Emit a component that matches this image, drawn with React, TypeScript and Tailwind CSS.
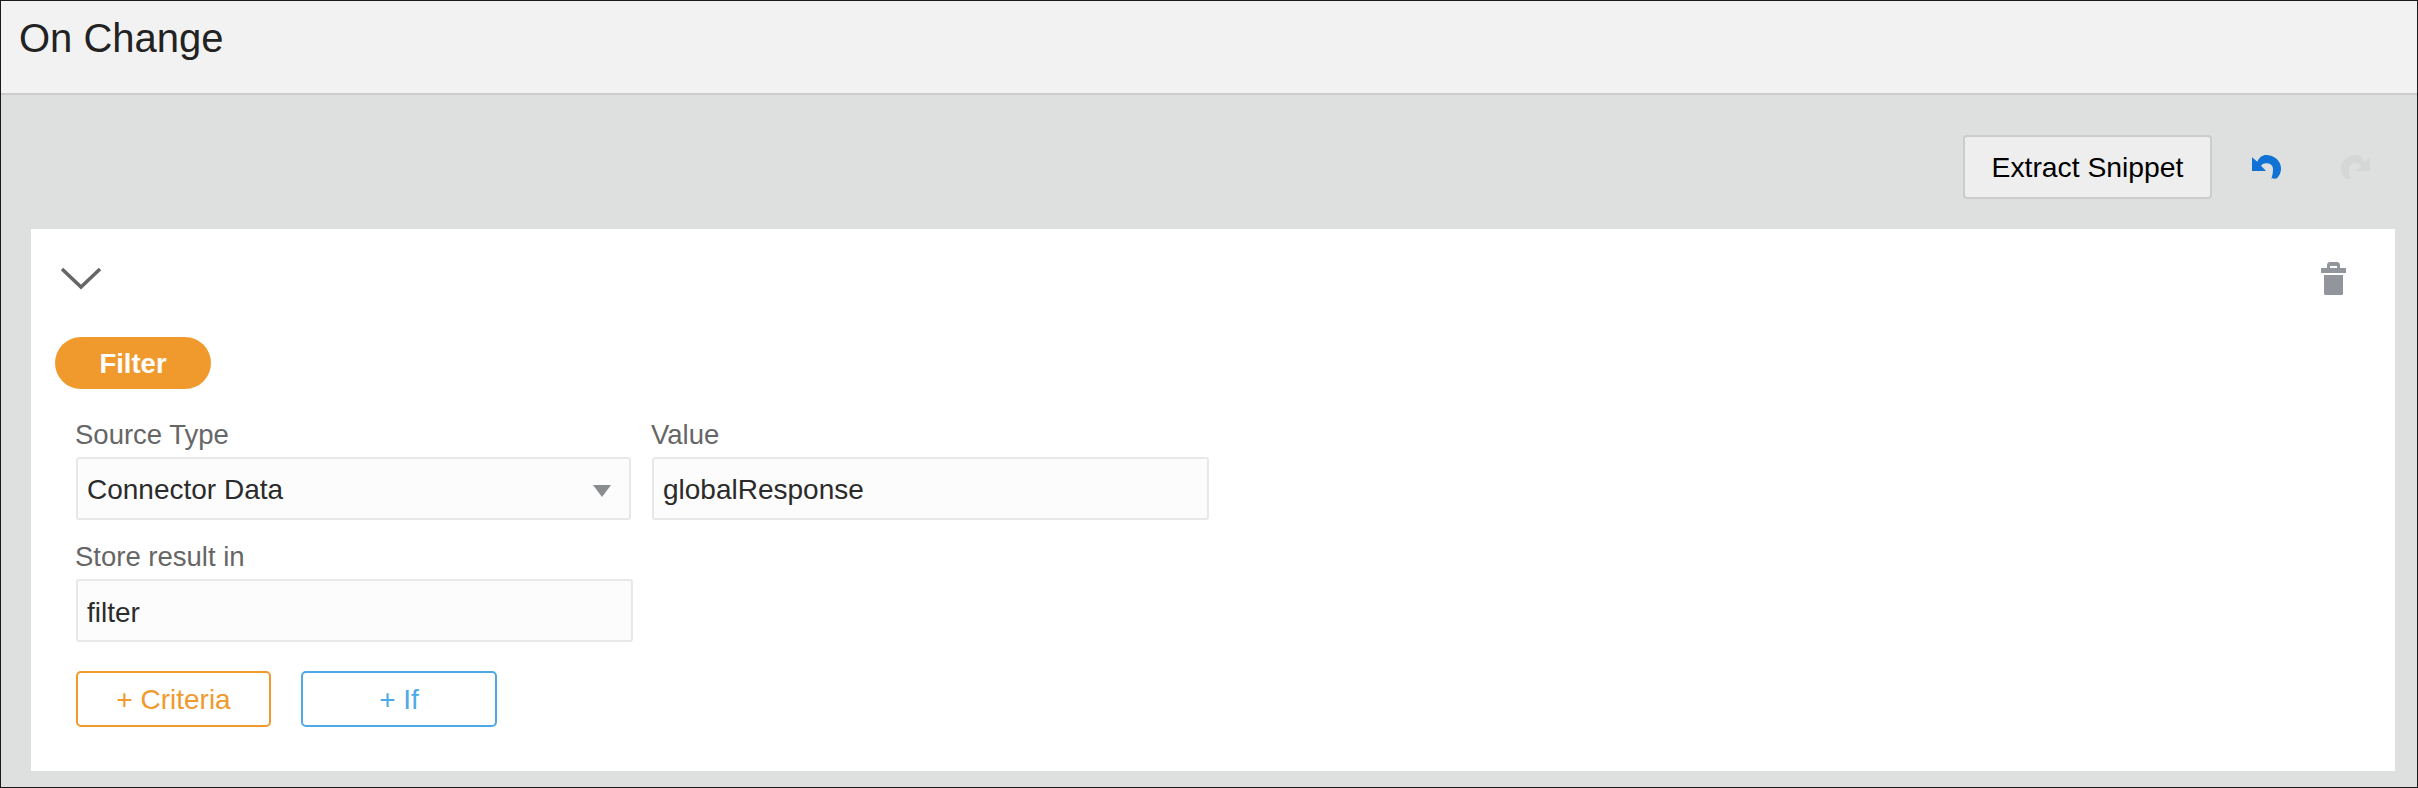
const font = { fontFamily: '"Liberation Sans", Arial, sans-serif' };

function Undo({ color, flip }: { color: string; flip?: boolean }) {
  return (
    <svg width="30" height="26" viewBox="0 0 30 26" className={flip ? "-scale-x-100" : ""}>
      <path
        fill={color}
        d="M0 3.3V17H14L9 11.7C10.500 10 12.200 9.300 14 9.300C18 9.300 21 11.300 21 15C21 18 20.500 21 19.500 24.300C19.500 24.800 25 24.800 25 24.300C28 21 29 18 29 14.300C29 6.500 22 1 14 1C10.500 1 7.500 3 5.300 7.700Z"
      />
    </svg>
  );
}

function Trash() {
  return (
    <svg width="25" height="33" viewBox="0 0 25 33" fill="#92959c">
      <path d="M6 7V3C6 1 7.500 0 9 0H16C17.500 0 19 1 19 3V7H16V4H9V7Z" />
      <path d="M1 6H24C24.600 6 25 6.400 25 7V11H0V7C0 6.400 .4 6 1 6Z" />
      <path d="M3 13H22V31.500C22 32.300 21.500 33 20.500 33H4.500C3.500 33 3 32.300 3 31.500Z" />
    </svg>
  );
}

function Field({ label, value, width, select, shift }: { label: string; value: string; width: string; select?: boolean; shift?: boolean }) {
  return (
    <div className={`flex flex-col ${width}`}>
      <label className="text-[27.500px] leading-[32px] text-[#666666] h-[38px] -ml-[1px]">{label}</label>
      <div className="relative h-[63px] border-2 border-[#e8e8e8] rounded-[3px] bg-[#fcfcfc] pl-[9px] flex items-center text-[28px] text-[#2b2b2b]">
        <span className={shift ? "mt-[4px]" : "mt-[2px]"}>{value}</span>
        {select && (
          <svg width="18" height="12" viewBox="0 0 18 12" className="absolute right-[18px] top-[26px]">
            <path d="M0 0H18L9 12Z" fill="#8a8d8f" />
          </svg>
        )}
      </div>
    </div>
  );
}

export default function App() {
  return (
    <div style={font} className="w-[2418px] h-[788px] border border-[#1a1a1a] bg-[#dee0df] flex flex-col">
      <header className="h-[94px] shrink-0 bg-[#f2f2f2] border-b-2 border-[#cccccc] pl-[18px] pt-[14px]">
        <h1 className="text-[40px] leading-[46px] text-[#222222]">On Change</h1>
      </header>
      <div className="h-[40px] shrink-0" />
      <div className="flex items-center h-[64px] shrink-0">
        <div className="ml-auto flex items-center">
          <button className="w-[249px] h-[64px] border-2 border-[#cccccc] rounded-[4px] bg-[#eeeeee] text-[28.300px] text-black">
            Extract Snippet
          </button>
          <div className="ml-[40px] w-[30px] h-[26px] -mt-[1px]">
            <Undo color="#0f72d4" />
          </div>
          <div className="ml-[58px] mr-[47px] w-[30px] h-[26px] -mt-[1px]">
            <Undo color="#d5d7d6" flip />
          </div>
        </div>
      </div>
      <main className="mt-[30px] ml-[30px] w-[2364px] h-[542px] bg-white flex flex-col">
        <div className="flex justify-between h-[108px] shrink-0 pt-[33px]">
          <svg width="42" height="24" viewBox="0 0 42 24" className="ml-[29px] mt-[5px]">
            <path d="M2 2L21 20L40 2" fill="none" stroke="#666666" strokeWidth="3.500" />
          </svg>
          <div className="mr-[49px]">
            <Trash />
          </div>
        </div>
        <div className="ml-[24px] w-[156px] h-[52px] rounded-full bg-[#f09a2e] text-white font-bold text-[27.500px] flex items-center justify-center">
          <span className="mt-[1px]">Filter</span>
        </div>
        <div className="mt-[30px] ml-[45px] flex flex-col">
          <div className="flex gap-[21px]">
            <Field label="Source Type" value="Connector Data" width="w-[555px]" select />
            <Field label="Value" value="globalResponse" width="w-[557px]" />
          </div>
          <div className="mt-[21px]">
            <Field label="Store result in" value="filter" width="w-[557px]" shift />
          </div>
          <div className="mt-[29px] flex gap-[30px]">
            <button className="w-[195px] h-[56px] border-2 border-[#f09a2e] rounded-[5px] text-[#f09a2e] text-[28px] bg-white">
              <span className="relative top-[1px]">+ Criteria</span>
            </button>
            <button className="w-[196px] h-[56px] border-2 border-[#4eaae6] rounded-[5px] text-[#4eaae6] text-[28px] bg-white">
              <span className="relative top-[1px]">+ If</span>
            </button>
          </div>
        </div>
      </main>
    </div>
  );
}
